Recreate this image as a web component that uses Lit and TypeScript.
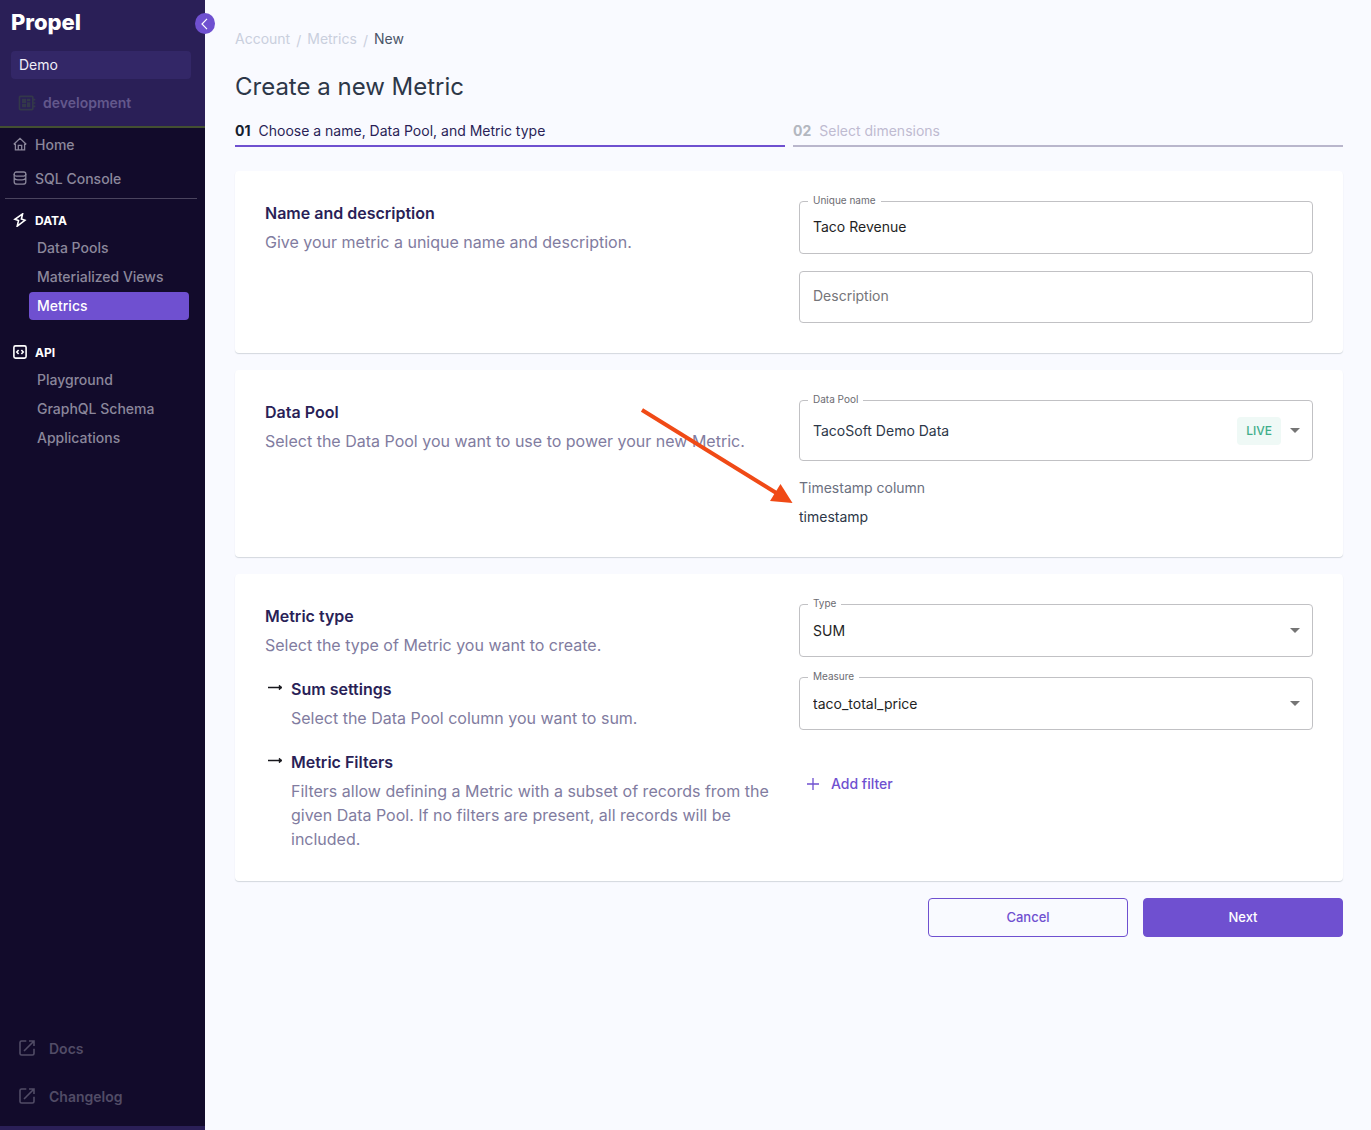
import { LitElement, css, html, nothing, svg, type TemplateResult } from "lit";
import { customElement, property } from "lit/decorators.js";

const icons: Record<string, TemplateResult> = {
  home: svg`<path d="M.8 7.300 7 1.300l6.200 6M.8 7.300h1.600v5.600h9.200V7.300h1.600M5.300 12.700V8.400h3.400v4.300"/>`,
  database: svg`<rect x="1.200" y="1" width="11.600" height="4.200" rx="2.100"/><path d="M1.200 3v8c0 1.300 1.500 2.200 3.200 2.200h5.200c1.700 0 3.200-.9 3.200-2.200V3M1.200 7c.6 1.500 2 1.900 3.600 1.900h4.400c1.600 0 3-.4 3.600-1.900"/>`,
  bolt: svg`<path d="M9.600.8 1.900 6.300l3.600 1.300-1.300 5.600 7.700-5.900-3.500-1.200z"/>`,
  code: svg`<rect x=".9" y=".9" width="12.200" height="12.200" rx="1.600"/><path d="M5.600 5 3.800 7l1.800 2M8.400 5l1.800 2-1.800 2"/>`,
  external: svg`<path d="M7.300 1H2.600C1.700 1 1 1.700 1 2.600v10.800c0 .9.700 1.600 1.600 1.600h10.800c.9 0 1.600-.7 1.600-1.600V8.700M10 1h5v5M15 1 5 11"/>`,
};

interface NavGroup {
  label: string;
  icon: string;
  items: string[];
}

const groups: NavGroup[] = [
  { label: "DATA", icon: "bolt", items: ["Data Pools", "Materialized Views", "Metrics"] },
  { label: "API", icon: "code", items: ["Playground", "GraphQL Schema", "Applications"] },
];

@customElement("side-nav")
export class SideNav extends LitElement {
  @property() current = "Metrics";

  static styles = css`
    :host {
      position: relative;
      display: flex;
      flex-direction: column;
      box-sizing: border-box;
      border-bottom: 4px solid #2a1f57;
      background: #120b2b;
      color: #8b879b;
      font-size: 14px;
      font-weight: 500;
    }
    a {
      color: inherit;
      text-decoration: none;
    }
    .icon {
      flex: none;
      width: 14px;
      height: 14px;
      fill: none;
      stroke: currentColor;
      stroke-width: 1.3;
    }
    .top {
      display: flex;
      flex-direction: column;
      box-sizing: border-box;
      height: 128px;
      padding: 8px 14px 0 11px;
      border-bottom: 2px solid #435031;
      background: #2a1f57;
    }
    .logo {
      color: #fff;
      font-size: 22px;
      font-weight: 800;
      line-height: 28px;
    }
    .account {
      margin-top: 15px;
      padding: 0 8px;
      border: 0;
      border-radius: 4px;
      background: #332767;
      color: #f0eef8;
      font: 400 14px/28px Inter, sans-serif;
      text-align: left;
    }
    .env {
      display: flex;
      align-items: center;
      gap: 6px;
      height: 48px;
      padding-left: 6px;
      color: #63588c;
      font-weight: 600;
    }
    .env svg {
      width: 20px;
      height: 20px;
      fill: #33384a;
    }
    .toggle {
      position: absolute;
      top: 13px;
      right: -10px;
      display: grid;
      place-items: center;
      width: 20px;
      height: 21px;
      padding: 0;
      border: 0;
      border-radius: 50%;
      background: #6f50d0;
      color: #fff;
    }
    .toggle svg {
      width: 12px;
      height: 12px;
      fill: none;
      stroke: currentColor;
      stroke-width: 1.2;
    }
    .main {
      display: grid;
      gap: 2px;
      margin: 0 8px 0 5px;
      padding-bottom: 4px;
      border-bottom: 1px solid #4a445e;
    }
    .row {
      display: flex;
      align-items: center;
      gap: 8px;
      height: 32px;
      padding-left: 8px;
    }
    .head {
      display: flex;
      align-items: center;
      gap: 8px;
      height: 28px;
      margin: 7px 0 0 13px;
      color: #fff;
      font-size: 12px;
      font-weight: 700;
    }
    .group + .group .head {
      margin-top: 18px;
    }
    .head .icon {
      stroke-width: 1.6;
    }
    .list {
      display: grid;
      gap: 1px;
      margin: 0 16px 0 29px;
      padding: 0;
      list-style: none;
    }
    .link {
      display: block;
      padding: 0 8px;
      border-radius: 4px;
      line-height: 28px;
    }
    .link.on {
      background: #6f50d0;
      color: #fff;
    }
    .foot {
      display: grid;
      gap: 24px;
      margin-top: auto;
      padding: 0 0 18px 19px;
      color: #514c66;
      font-weight: 600;
    }
    .foot a {
      display: flex;
      align-items: center;
      gap: 14px;
      height: 24px;
    }
    .foot .icon {
      width: 16px;
      height: 16px;
      stroke-width: 1.6;
    }
  `;

  private icon(name: string, size = 14) {
    return html`<svg class="icon" viewBox="0 0 ${size} ${size}" aria-hidden="true">${icons[name]}</svg>`;
  }

  render() {
    return html`
      <div class="top">
        <div class="logo">Propel</div>
        <button class="account">Demo</button>
        <a class="env" href="#environment">
          <svg viewBox="0 0 24 24" aria-hidden="true">
            <path
              d="M22 9V7h-2V5c0-1.100-.9-2-2-2H4c-1.100 0-2 .9-2 2v14c0 1.100.9 2 2 2h14c1.100 0 2-.9 2-2v-2h2v-2h-2v-2h2v-2h-2V9h2zm-4 10H4V5h14v14zM6 13h5v4H6zm6-6h4v3h-4zM6 7h5v5H6zm6 4h4v6h-4z"
            />
          </svg>
          development
        </a>
      </div>
      <button class="toggle" aria-label="Collapse navigation">
        <svg viewBox="0 0 12 12" aria-hidden="true"><path d="M8 .8 3 6l5 5.200" /></svg>
      </button>
      <nav>
        <div class="main">
          <a class="row" href="#home">${this.icon("home")}Home</a>
          <a class="row" href="#sql">${this.icon("database")}SQL Console</a>
        </div>
        ${groups.map(
          (group) => html`
            <div class="group">
              <div class="head">${this.icon(group.icon)}${group.label}</div>
              <ul class="list">
                ${group.items.map(
                  (item) => html`<li>
                    <a class="link ${item === this.current ? "on" : ""}" href="#${item}">${item}</a>
                  </li>`
                )}
              </ul>
            </div>
          `
        )}
      </nav>
      <div class="foot">
        <a href="#docs">${this.icon("external", 16)}Docs</a>
        <a href="#changelog">${this.icon("external", 16)}Changelog</a>
      </div>
    `;
  }
}

@customElement("app-root")
export class AppRoot extends LitElement {
  static styles = css`
    :host {
      display: grid;
      grid-template-columns: 205px minmax(0, 1fr);
      min-height: 100vh;
      background: #f9faff;
      font-family: Inter, "Liberation Sans", sans-serif;
      font-size: 14px;
    }
    h1,
    h2,
    h3,
    p,
    ol,
    dl,
    dd {
      margin: 0;
      padding: 0;
    }
    .page {
      padding: 29px 28px 30px 30px;
    }
    .crumbs {
      display: flex;
      gap: 6px;
      color: #c9cfdd;
      line-height: 20px;
    }
    .crumbs a {
      color: inherit;
      text-decoration: none;
    }
    .crumbs .slash {
      padding-top: 2px;
    }
    .crumbs .here {
      color: #4a5568;
    }
    h1 {
      margin-top: 20px;
      color: #2d3748;
      font-size: 24px;
      font-weight: 400;
      line-height: 32px;
    }
    .steps {
      display: grid;
      grid-template-columns: 1fr 1fr;
      gap: 8px;
      margin-top: 18px;
      list-style: none;
    }
    .step {
      display: flex;
      gap: 8px;
      padding-bottom: 4px;
      border-bottom: 2px solid #b9b6cc;
      color: #bfbbd1;
      line-height: 20px;
    }
    .step b {
      color: #b3b7c0;
      font-weight: 700;
    }
    .step.on {
      border-color: #6f50d0;
      color: #2a1f57;
    }
    .step.on b {
      color: #14202e;
    }
    .cards {
      display: grid;
      gap: 17px;
      margin-top: 24px;
    }
    .card {
      display: grid;
      grid-template-columns: minmax(0, 1fr) minmax(0, 1fr);
      gap: 20px;
      padding: 30px;
      border-radius: 4px;
      background: #fff;
      box-shadow: 0 1px 1px #d3d7de;
    }
    .texts {
      display: grid;
      align-content: start;
      gap: 20px;
    }
    .block {
      display: grid;
      gap: 5px;
      color: #817ca0;
      font-size: 16px;
      line-height: 24px;
    }
    .block.sub {
      position: relative;
      padding-left: 26px;
    }
    .block h2,
    .block h3 {
      color: #2a1f57;
      font-size: 16px;
      font-weight: 600;
    }
    .arrow {
      position: absolute;
      top: 5px;
      left: 3px;
      width: 15px;
      height: 10px;
      fill: #17171c;
      stroke: #17171c;
    }
    .fields {
      position: relative;
      display: grid;
      align-content: start;
      gap: 17px;
    }
    .fields.wide {
      gap: 20px;
    }
    .field {
      position: relative;
      display: grid;
    }
    .control {
      box-sizing: border-box;
      width: 100%;
      height: 53px;
      margin: 0;
      padding: 0 13px;
      border: 1px solid #c1c1c4;
      border-radius: 4px;
      background: #fff;
      color: #1f1f24;
      font: 400 14px/20px Inter, "Liberation Sans", sans-serif;
      appearance: none;
    }
    input.control {
      padding-bottom: 2px;
    }
    .control.empty {
      height: 52px;
    }
    .control.tall {
      height: 61px;
      color: #2d3748;
    }
    .label {
      position: absolute;
      top: -8px;
      left: 9px;
      padding: 0 5px;
      background: #fff;
      color: #6c6c72;
      font-size: 10px;
      line-height: 14px;
    }
    .label.rest {
      top: 15px;
      color: #757579;
      font-size: 14px;
      line-height: 20px;
    }
    .adorn {
      position: absolute;
      inset: 0 13px 0 auto;
      display: flex;
      align-items: center;
      gap: 9px;
      pointer-events: none;
    }
    .caret {
      border: 5px solid transparent;
      border-top-color: #757575;
      border-bottom: 0;
    }
    .live {
      padding: 0 9px;
      border-radius: 4px;
      background: #eff9f6;
      color: #3fae8a;
      font-size: 12px;
      font-weight: 500;
      line-height: 28px;
    }
    .facts {
      display: grid;
      gap: 9px;
      color: #6b7080;
      line-height: 20px;
    }
    .facts dd {
      color: #2d3748;
    }
    .pointer {
      position: absolute;
      top: 7px;
      right: calc(100% + 6px);
      width: 152px;
      height: 98px;
      pointer-events: none;
    }
    .add {
      display: flex;
      align-items: center;
      justify-self: start;
      gap: 12px;
      height: 40px;
      margin-top: 14px;
      padding: 0 8px;
      border: 0;
      background: none;
      color: #6f50d0;
      font: 500 14px/20px Inter, "Liberation Sans", sans-serif;
    }
    .add svg {
      width: 12px;
      height: 12px;
      stroke: currentColor;
      stroke-width: 1.3;
    }
    .actions {
      display: flex;
      justify-content: flex-end;
      gap: 15px;
      margin-top: 17px;
    }
    .button {
      width: 200px;
      height: 39px;
      padding: 0 0 2px;
      border: 1px solid #6f50d0;
      border-radius: 4px;
      background: none;
      color: #6f50d0;
      font: 500 13px/20px Inter, "Liberation Sans", sans-serif;
    }
    .button.primary {
      background: #6f50d0;
      color: #fff;
    }
  `;

  private select(id: string, label: string, value: string, badge?: string) {
    return html`
      <div class="field">
        <select id=${id} class="control ${badge ? "tall" : ""}">
          <option>${value}</option>
        </select>
        <label class="label" for=${id}>${label}</label>
        <div class="adorn">
          ${badge ? html`<span class="live">${badge}</span>` : nothing}
          <span class="caret"></span>
        </div>
      </div>
    `;
  }

  private subBlock(title: string, text: string) {
    return html`
      <div class="block sub">
        <svg class="arrow" viewBox="0 0 15 10" aria-hidden="true">
          <path d="M0 5.500h12" stroke-width="1.500" />
          <path d="m11.300 3.300 2.700 2.200-2.700 2.200z" stroke-width="1" />
        </svg>
        <h3>${title}</h3>
        <p>${text}</p>
      </div>
    `;
  }

  render() {
    return html`
      <side-nav current="Metrics"></side-nav>
      <main class="page">
        <nav class="crumbs" aria-label="Breadcrumb">
          <a href="#account">Account</a><span class="slash">/</span>
          <a href="#metrics">Metrics</a><span class="slash">/</span>
          <span class="here">New</span>
        </nav>
        <h1>Create a new Metric</h1>
        <ol class="steps">
          <li class="step on"><b>01</b>Choose a name, Data Pool, and Metric type</li>
          <li class="step"><b>02</b>Select dimensions</li>
        </ol>

        <form @submit=${(event: Event) => event.preventDefault()}>
          <div class="cards">
            <section class="card">
              <div class="texts">
                <div class="block">
                  <h2>Name and description</h2>
                  <p>Give your metric a unique name and description.</p>
                </div>
              </div>
              <div class="fields">
                <div class="field">
                  <input id="name" class="control" type="text" .value=${"Taco Revenue"} />
                  <label class="label" for="name">Unique name</label>
                </div>
                <div class="field">
                  <input id="description" class="control empty" type="text" />
                  <label class="label rest" for="description">Description</label>
                </div>
              </div>
            </section>

            <section class="card">
              <div class="texts">
                <div class="block">
                  <h2>Data Pool</h2>
                  <p>Select the Data Pool you want to use to power your new Metric.</p>
                </div>
              </div>
              <div class="fields">
                ${this.select("pool", "Data Pool", "TacoSoft Demo Data", "LIVE")}
                <dl class="facts">
                  <dt>Timestamp column</dt>
                  <dd>timestamp</dd>
                </dl>
                <svg class="pointer" viewBox="0 0 152 98" aria-hidden="true">
                  <path d="M1 3 137 87" stroke="#f04a16" stroke-width="4" />
                  <path d="M151.500 96 139.500 77 129 94z" fill="#f04a16" />
                </svg>
              </div>
            </section>

            <section class="card">
              <div class="texts">
                <div class="block">
                  <h2>Metric type</h2>
                  <p>Select the type of Metric you want to create.</p>
                </div>
                ${this.subBlock("Sum settings", "Select the Data Pool column you want to sum.")}
                ${this.subBlock(
                  "Metric Filters",
                  "Filters allow defining a Metric with a subset of records from the given Data Pool. If no filters are present, all records will be included."
                )}
              </div>
              <div class="fields wide">
                ${this.select("type", "Type", "SUM")} ${this.select("measure", "Measure", "taco_total_price")}
                <button class="add" type="button">
                  <svg viewBox="0 0 12 12" aria-hidden="true"><path d="M6 0v12M0 6h12" /></svg>
                  Add filter
                </button>
              </div>
            </section>
          </div>
          <div class="actions">
            <button class="button" type="button">Cancel</button>
            <button class="button primary" type="submit">Next</button>
          </div>
        </form>
      </main>
    `;
  }
}
